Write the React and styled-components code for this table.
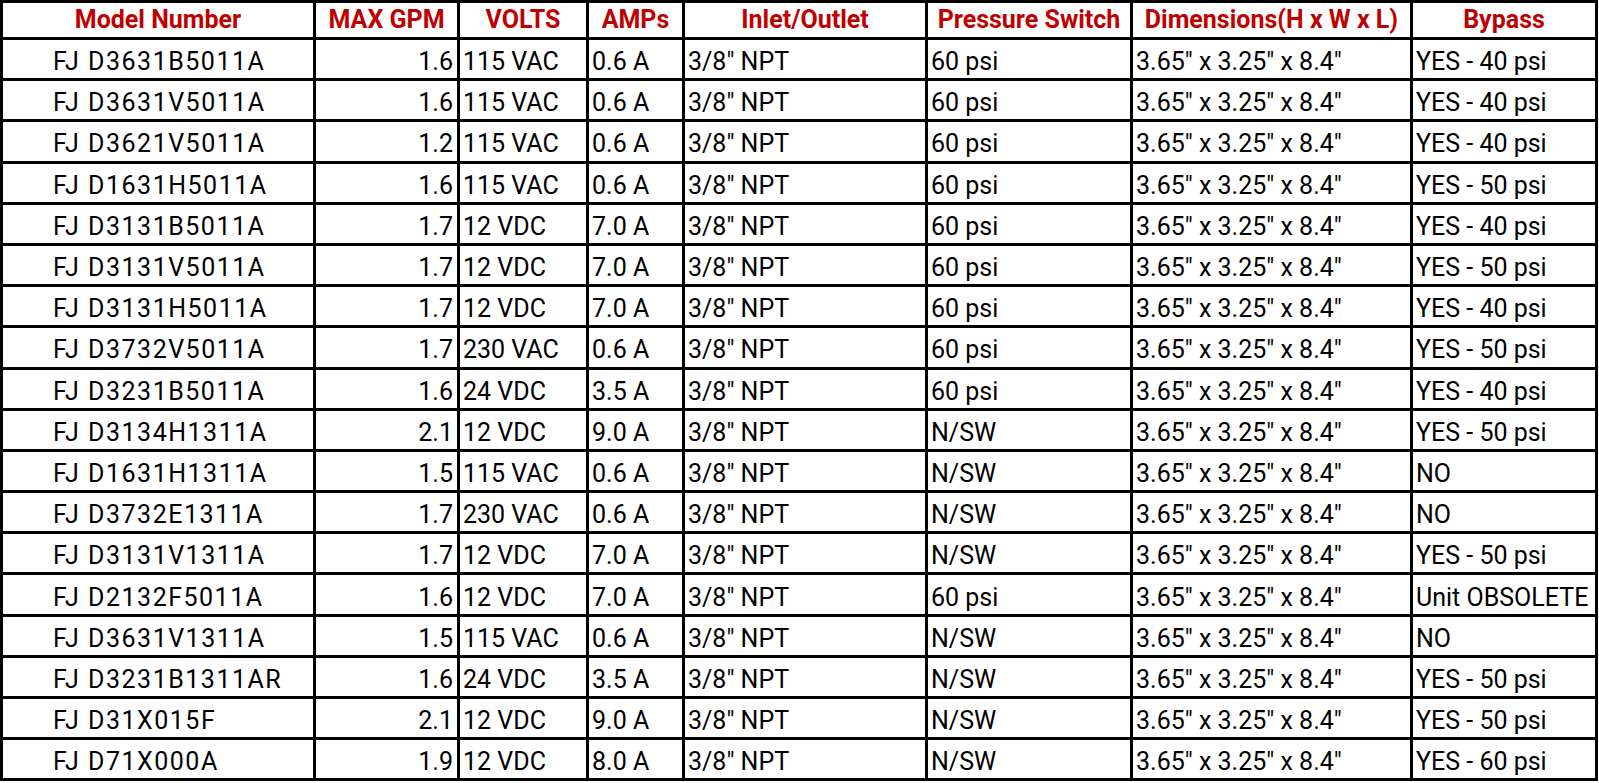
import React from "react";
import styled, { createGlobalStyle } from "styled-components";

const GlobalStyle = createGlobalStyle`
  html, body {
    margin: 0;
    padding: 0;
    background: #ffffff;
  }
  body {
    font-family: Roboto, "Liberation Sans", sans-serif;
  }
`;

const columns = [
  { key: "model", title: "Model Number", width: 313, align: "left" },
  { key: "gpm", title: "MAX GPM", width: 144, align: "right" },
  { key: "volts", title: "VOLTS", width: 129, align: "left" },
  { key: "amps", title: "AMPs", width: 96, align: "left" },
  { key: "port", title: "Inlet/Outlet", width: 243, align: "left" },
  { key: "switch", title: "Pressure Switch", width: 205, align: "left" },
  { key: "dims", title: "Dimensions(H x W x L)", width: 280, align: "left" },
  { key: "bypass", title: "Bypass", width: 185, align: "left" },
];

const DIMS = '3.65" x 3.25" x 8.4"';
const NPT = '3/8" NPT';

const rows = [
  ["FJ D3631B5011A", "1.6", "115 VAC", "0.6 A", NPT, "60 psi", DIMS, "YES - 40 psi"],
  ["FJ D3631V5011A", "1.6", "115 VAC", "0.6 A", NPT, "60 psi", DIMS, "YES - 40 psi"],
  ["FJ D3621V5011A", "1.2", "115 VAC", "0.6 A", NPT, "60 psi", DIMS, "YES - 40 psi"],
  ["FJ D1631H5011A", "1.6", "115 VAC", "0.6 A", NPT, "60 psi", DIMS, "YES - 50 psi"],
  ["FJ D3131B5011A", "1.7", "12 VDC", "7.0 A", NPT, "60 psi", DIMS, "YES - 40 psi"],
  ["FJ D3131V5011A", "1.7", "12 VDC", "7.0 A", NPT, "60 psi", DIMS, "YES - 50 psi"],
  ["FJ D3131H5011A", "1.7", "12 VDC", "7.0 A", NPT, "60 psi", DIMS, "YES - 40 psi"],
  ["FJ D3732V5011A", "1.7", "230 VAC", "0.6 A", NPT, "60 psi", DIMS, "YES - 50 psi"],
  ["FJ D3231B5011A", "1.6", "24 VDC", "3.5 A", NPT, "60 psi", DIMS, "YES - 40 psi"],
  ["FJ D3134H1311A", "2.1", "12 VDC", "9.0 A", NPT, "N/SW", DIMS, "YES - 50 psi"],
  ["FJ D1631H1311A", "1.5", "115 VAC", "0.6 A", NPT, "N/SW", DIMS, "NO"],
  ["FJ D3732E1311A", "1.7", "230 VAC", "0.6 A", NPT, "N/SW", DIMS, "NO"],
  ["FJ D3131V1311A", "1.7", "12 VDC", "7.0 A", NPT, "N/SW", DIMS, "YES - 50 psi"],
  ["FJ D2132F5011A", "1.6", "12 VDC", "7.0 A", NPT, "60 psi", DIMS, "Unit OBSOLETE"],
  ["FJ D3631V1311A", "1.5", "115 VAC", "0.6 A", NPT, "N/SW", DIMS, "NO"],
  ["FJ D3231B1311AR", "1.6", "24 VDC", "3.5 A", NPT, "N/SW", DIMS, "YES - 50 psi"],
  ["FJ D31X015F", "2.1", "12 VDC", "9.0 A", NPT, "N/SW", DIMS, "YES - 50 psi"],
  ["FJ D71X000A", "1.9", "12 VDC", "8.0 A", NPT, "N/SW", DIMS, "YES - 60 psi"],
];

const Sheet = styled.table`
  width: 1598px;
  table-layout: fixed;
  border-collapse: collapse;
  border: 3px solid #000;
`;

const HeadCell = styled.th`
  height: 34px;
  padding: 0 2px;
  border: 3px solid #000;
  color: #c00000;
  font-family: Roboto, "Liberation Sans", sans-serif;
  font-weight: 700;
  font-size: 25px;
  line-height: 28px;
  text-align: center;
  white-space: nowrap;
  vertical-align: middle;
`;

const Cell = styled.td`
  height: 32.2px;
  padding: ${(p) => (p.$indent ? "6px 2px 0 50px" : "6px 4px 0 3px")};
  border: 3px solid #000;
  color: #000;
  font-family: Roboto, "Liberation Sans", sans-serif;
  font-size: 25px;
  line-height: 26px;
  letter-spacing: ${(p) => (p.$indent ? "1.5px" : "0")};
  text-align: ${(p) => p.$align};
  white-space: nowrap;
  overflow: hidden;
  vertical-align: middle;
`;

export default function App() {
  return (
    <>
      <GlobalStyle />
      <Sheet>
        <colgroup>
          {columns.map((c) => (
            <col key={c.key} style={{ width: c.width }} />
          ))}
        </colgroup>
        <thead>
          <tr>
            {columns.map((c) => (
              <HeadCell key={c.key}>{c.title}</HeadCell>
            ))}
          </tr>
        </thead>
        <tbody>
          {rows.map((r, i) => (
            <tr key={i}>
              {r.map((v, j) => (
                <Cell key={j} $align={columns[j].align} $indent={j === 0}>
                  {v}
                </Cell>
              ))}
            </tr>
          ))}
        </tbody>
      </Sheet>
    </>
  );
}
